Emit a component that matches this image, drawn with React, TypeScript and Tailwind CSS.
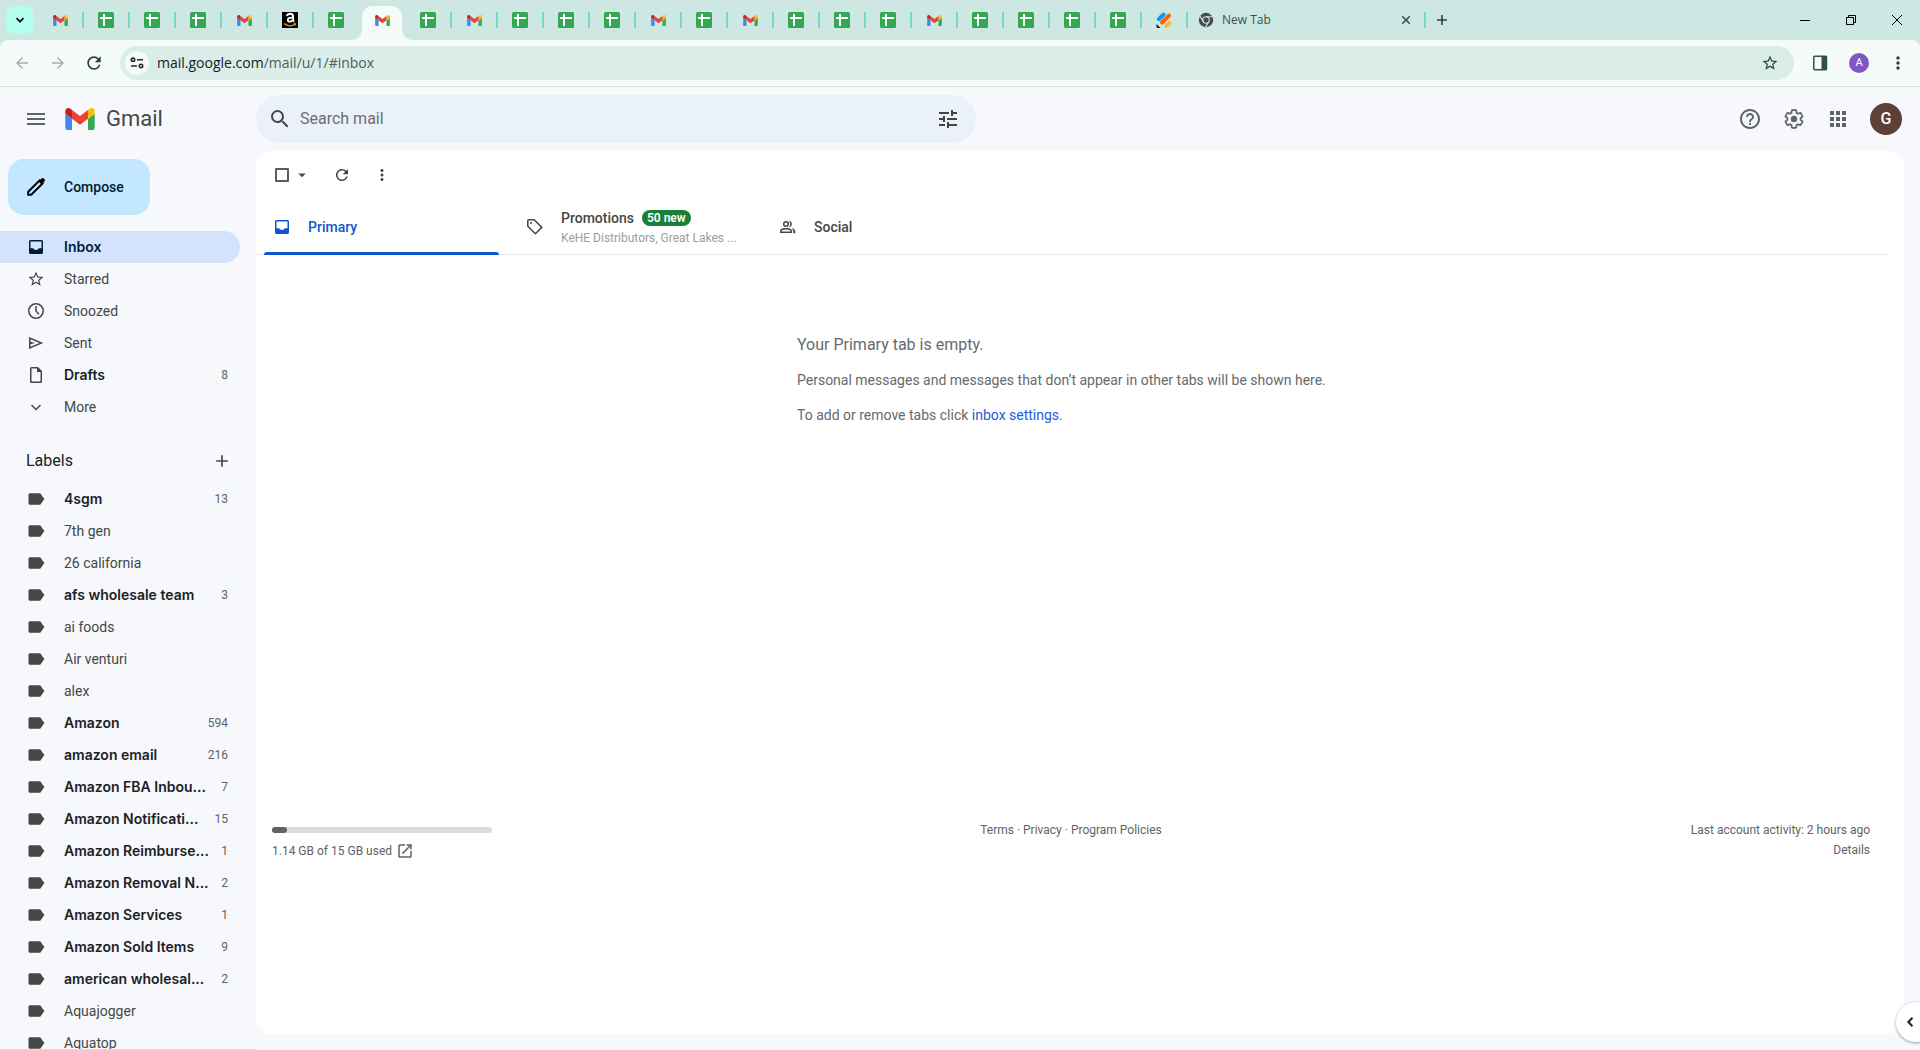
import React from "react";
import {
  MdAdd,
  MdApps,
  MdArrowBack,
  MdArrowDropDown,
  MdArrowForward,
  MdHelpOutline,
  MdLabel,
  MdMenu,
  MdMoreVert,
  MdOpenInNew,
  MdRefresh,
  MdSearch,
  MdStarBorder,
  MdTune,
} from "react-icons/md";

type IconProps = { className?: string };

const GmailMark = ({ className }: IconProps) => (
  <svg viewBox="52 42 88 66" className={className} aria-hidden="true">
    <path fill="#4285f4" d="M58 108h14V74L52 59v43c0 3.32 2.69 6 6 6" />
    <path fill="#34a853" d="M120 108h14c3.32 0 6-2.69 6-6V59l-20 15" />
    <path fill="#fbbc04" d="M120 48v26l20-15v-8c0-7.42-8.47-11.65-14.4-7.2" />
    <path fill="#ea4335" d="M72 74V48l24 18 24-18v26L96 92" />
    <path fill="#c5221f" d="M52 51v8l20 15V48l-5.600-4.200c-5.940-4.450-14.400-.22-14.400 7.200" />
  </svg>
);

const SheetMark = () => (
  <svg viewBox="0 0 16 16" className="size-4" aria-hidden="true">
    <rect width="16" height="16" rx="1.500" fill="#34a853" />
    <path d="M5 2h2v3h7v2H7v7H5V7H2V5h3z" fill="#fff" />
  </svg>
);

const AmazonMark = () => (
  <svg viewBox="0 0 16 16" className="size-4" aria-hidden="true">
    <rect width="16" height="16" fill="#000" />
    <path d="M5 4.200C5.200 2.500 6.500 1.800 8.200 1.800c1.900 0 2.900.9 2.900 2.600v3.400c0 .9.300 1.300.9 2" fill="none" stroke="#fff" strokeWidth="1.900" />
    <path d="M10.500 5.600c-3-.1-4.700.6-4.700 2.400 0 2.400 3.700 2.200 4.700-.2" fill="none" stroke="#fff" strokeWidth="1.800" />
    <path d="M2 11.400c3.400 3 8 3.100 11 .9" fill="none" stroke="#f90" strokeWidth="1.300" />
    <path d="M11.600 11.300h2.300l-.6 2.200" fill="none" stroke="#f90" strokeWidth=".9" />
  </svg>
);

const StripesMark = () => (
  <svg viewBox="0 0 16 16" className="size-4" aria-hidden="true">
    <g strokeWidth="4" strokeLinecap="round">
      <path d="M3 7l4.500-4.500" stroke="#0a99ff" />
      <path d="M6 10.500L13 3.600" stroke="#ff6100" />
      <path d="M10.500 13.800l3-2.800" stroke="#ffb629" />
    </g>
    <path d="M.5 12l4 4h-3a1 1 0 0 1-1-1z" fill="#0a1551" />
  </svg>
);

const ChromeMark = () => (
  <svg viewBox="0 0 16 16" className="size-4" aria-hidden="true">
    <circle cx="8" cy="8" r="7.200" fill="#474b4f" />
    <g stroke="#cde8e2" strokeWidth="1.100" fill="none">
      <circle cx="8" cy="8" r="3.200" />
      <path d="M8 4.800h6.600M5.200 9.600L1.900 3.900M10.800 9.600L7.500 15.300" />
    </g>
  </svg>
);

const InboxIcon = ({ className }: IconProps) => (
  <svg viewBox="0 0 20 20" className={className} fill="currentColor" aria-hidden="true">
    <path fillRule="evenodd" d="M4.500 3A1.500 1.500 0 0 0 3 4.500v11A1.500 1.500 0 0 0 4.500 17h11a1.500 1.500 0 0 0 1.500-1.500v-11A1.500 1.500 0 0 0 15.500 3zM4.500 4.500h11v6.800h-2.700C12.300 12.400 11.300 13 10 13s-2.300-.6-2.800-1.700H4.500z" />
  </svg>
);

const ClockIcon = ({ className }: IconProps) => (
  <svg viewBox="0 0 20 20" className={className} fill="none" stroke="currentColor" strokeWidth="1.500" aria-hidden="true">
    <circle cx="10" cy="10" r="7.250" />
    <path d="M10 5v5l3 3.200" />
  </svg>
);

const SentIcon = ({ className }: IconProps) => (
  <svg viewBox="0 0 20 20" className={className} fill="currentColor" aria-hidden="true">
    <path fillRule="evenodd" d="M3 16V4l14.300 6zM4.500 13.800L13.500 10l-9-3.800v2.600L9 10l-4.500 1.200z" />
  </svg>
);

const DraftIcon = ({ className }: IconProps) => (
  <svg viewBox="0 0 20 20" className={className} fill="currentColor" aria-hidden="true">
    <path fillRule="evenodd" d="M5.500 2A1.500 1.500 0 0 0 4 3.500v13A1.500 1.500 0 0 0 5.500 18h9a1.500 1.500 0 0 0 1.500-1.500V6l-4-4zM5.500 3.500H11V7h3.500v9.500h-9z" />
  </svg>
);

const ChevronDown = ({ className }: IconProps) => (
  <svg viewBox="0 0 20 20" className={className} fill="none" stroke="currentColor" strokeWidth="1.500" aria-hidden="true">
    <path d="M5.500 8l4.500 4.500L14.500 8" />
  </svg>
);

const TagIcon = ({ className }: IconProps) => (
  <svg viewBox="0 0 20 20" className={className} fill="none" stroke="currentColor" strokeWidth="1.500" strokeLinejoin="round" aria-hidden="true">
    <path d="M2.800 3.800a1 1 0 0 1 1-1h5.400l7.600 7.600-6.400 6.400-7.600-7.600z" />
    <circle cx="6" cy="6" r="1" fill="currentColor" stroke="none" />
  </svg>
);

const PeopleIcon = ({ className }: IconProps) => (
  <svg viewBox="0 0 20 20" className={className} fill="none" stroke="currentColor" strokeWidth="1.500" aria-hidden="true">
    <circle cx="8" cy="7" r="2.300" />
    <path d="M2.750 15.250v-1c0-1.300 2.500-2.400 5.250-2.400s5.250 1.100 5.250 2.400v1z" />
    <path d="M11.500 4.100c1.500.3 2.100 1.500 2.100 2.900s-.6 2.600-2.100 2.900c1.300-1.700 1.300-4.100 0-5.800zM14 11.500c1.900.6 3 1.500 3 2.700V16h-1.500v-1.800c0-1-.5-1.900-1.500-2.700z" fill="currentColor" strokeWidth=".5" />
  </svg>
);

const PencilIcon = ({ className }: IconProps) => (
  <svg viewBox="0 0 24 24" className={className} aria-hidden="true">
    <path d="M4.200 16.800L15.600 5.400l3 3L7.200 19.800H4.200z" fill="none" stroke="currentColor" strokeWidth="2" />
    <path d="M14.500 6.500l2.900-2.900a1.800 1.800 0 0 1 2.500 0l.5.500a1.800 1.800 0 0 1 0 2.500l-2.900 2.900z" fill="currentColor" />
  </svg>
);

const GearIcon = ({ className }: IconProps) => (
  <svg viewBox="0 0 24 24" className={className} aria-hidden="true">
    <path
      fill="none"
      stroke="currentColor"
      strokeWidth="1.900"
      strokeLinejoin="round"
      d="M19.140 12.940c.04-.3.06-.61.06-.94 0-.32-.02-.64-.07-.94l2.030-1.580a.49.49 0 0 0 .12-.61l-1.920-3.320a.488.488 0 0 0-.59-.22l-2.390.96c-.5-.38-1.030-.7-1.620-.94l-.36-2.540a.484.484 0 0 0-.48-.41h-3.840c-.24 0-.43.17-.47.41l-.36 2.540c-.59.24-1.130.57-1.620.94l-2.390-.96c-.22-.08-.47 0-.59.22L2.740 8.870c-.12.21-.08.47.12.61l2.030 1.580c-.05.3-.09.63-.09.94s.02.64.07.94l-2.030 1.580a.49.49 0 0 0-.12.61l1.920 3.320c.12.22.37.29.59.22l2.390-.96c.5.38 1.030.7 1.620.94l.36 2.540c.05.24.24.41.48.41h3.840c.24 0 .44-.17.47-.41l.36-2.540c.59-.24 1.130-.56 1.620-.94l2.390.96c.22.08.47 0 .59-.22l1.920-3.320c.12-.22.07-.47-.12-.61l-2.010-1.580z"
    />
    <circle cx="12" cy="12" r="3.500" fill="currentColor" />
  </svg>
);

const SiteInfoIcon = () => (
  <svg viewBox="0 0 16 16" className="size-4" fill="none" stroke="#1d2b28" strokeWidth="1.600" aria-hidden="true">
    <circle cx="4" cy="4.800" r="1.700" />
    <path d="M8 4.800h6M2 11h6" />
    <circle cx="12" cy="11" r="1.700" />
  </svg>
);

type TabKind = "mail" | "sheet" | "amazon" | "stripes";

const tabs: TabKind[] = [
  "mail", "sheet", "sheet", "sheet", "mail", "amazon", "sheet", "mail", "sheet",
  "mail", "sheet", "sheet", "sheet", "mail", "sheet", "mail", "sheet", "sheet",
  "sheet", "mail", "sheet", "sheet", "sheet", "sheet", "stripes",
];
const activeTab = 7;

const TabMark = ({ kind }: { kind: TabKind }) => {
  if (kind === "mail") return <GmailMark className="h-[11px] w-[15px]" />;
  if (kind === "sheet") return <SheetMark />;
  if (kind === "amazon") return <AmazonMark />;
  return <StripesMark />;
};

const Separator = () => <span className="h-4 w-[2px] shrink-0 bg-[#74d9cb]" />;

const TabStrip = () => (
  <div className="flex h-10 shrink-0 items-center bg-[#cde8e2] pl-1.5">
    <button aria-label="Search tabs" className="mr-1 flex size-7 items-center justify-center rounded-[10px] bg-[#b2fff0]">
      <svg viewBox="0 0 10 10" className="size-2.5" fill="none" stroke="#111" strokeWidth="1.800" aria-hidden="true">
        <path d="M1.500 3.200L5 6.700l3.500-3.500" />
      </svg>
    </button>
    {tabs.map((kind, i) =>
      i === activeTab ? (
        <button key={i} aria-label="Gmail tab" aria-current="page" className="relative flex h-full w-[46px] items-end pl-0.5">
          <span className="flex h-[34px] w-10 items-start justify-center rounded-t-[10px] bg-[#f4fbf9] pt-1.5">
            <span className="flex size-4 items-center justify-center"><TabMark kind={kind} /></span>
          </span>
          <svg viewBox="0 0 64 12" className="absolute bottom-0 -left-2.5 h-3 w-16" fill="#f4fbf9" aria-hidden="true">
            <path d="M0 12c8 0 12-4 12-12v12zM64 12c-8 0-12-4-12-12v12z" />
          </svg>
        </button>
      ) : (
        <button key={i} aria-label={`${kind} tab`} className="flex h-full w-[46px] items-center">
          <span className="flex w-11 justify-center"><TabMark kind={kind} /></span>
          {i !== activeTab - 1 && <Separator />}
        </button>
      )
    )}
    <div className="flex h-full w-[238px] items-center pl-[10px]">
      <ChromeMark />
      <span className="ml-2 flex-1 font-['Open_Sans','Noto_Sans',sans-serif] text-[12px] leading-4 text-[#37524c]">New Tab</span>
      <button aria-label="Close tab" className="mr-[13px]">
        <svg viewBox="0 0 10 10" className="size-2.5" stroke="#37524c" strokeWidth="1.600" aria-hidden="true">
          <path d="M1.200 1.200l7.600 7.600M8.800 1.200L1.200 8.800" />
        </svg>
      </button>
      <Separator />
    </div>
    <button aria-label="New tab" className="ml-[11px]">
      <svg viewBox="0 0 10 10" className="size-2.5" stroke="#24443e" strokeWidth="1.600" aria-hidden="true">
        <path d="M5 0v10M0 5h10" />
      </svg>
    </button>
    <div className="ml-auto flex h-full">
      <button aria-label="Minimize" className="flex w-[46px] items-center justify-center">
        <svg viewBox="0 0 10 10" className="size-2.5" stroke="#000" aria-hidden="true"><path d="M0 5.500h10" /></svg>
      </button>
      <button aria-label="Restore" className="flex w-[46px] items-center justify-center">
        <svg viewBox="0 0 10 10" className="size-2.5" stroke="#000" fill="none" aria-hidden="true">
          <path d="M.5 2.500h7v7h-7zM2.500 2.500v-2h7v7h-2" />
        </svg>
      </button>
      <button aria-label="Close" className="flex w-[46px] items-center justify-center">
        <svg viewBox="0 0 10 10" className="size-2.5" stroke="#000" aria-hidden="true"><path d="M0 0l10 10M10 0L0 10" /></svg>
      </button>
    </div>
  </div>
);

const AddressBar = () => (
  <div className="shrink-0 bg-[#cde8e2]">
    <div className="flex h-[47px] items-center rounded-t-lg border-b border-[#d3e3df] bg-[#f4fbf9] pl-[13px]">
      <button aria-label="Back" className="flex w-9 text-[#a3b0ad]"><MdArrowBack className="size-[18px]" /></button>
      <button aria-label="Forward" className="flex w-[35px] text-[#a3b0ad]"><MdArrowForward className="size-[18px]" /></button>
      <button aria-label="Reload" className="flex w-9 text-[#24443e]"><MdRefresh className="size-5" /></button>
      <div className="flex h-[34px] flex-1 items-center rounded-full bg-[#dbede8] pr-[15px] pl-[5px]">
        <button aria-label="Site information" className="flex size-6 items-center justify-center rounded-full bg-[#f4fbf9]">
          <SiteInfoIcon />
        </button>
        <a href="#inbox" className="ml-2 flex-1 font-['Open_Sans','Noto_Sans',sans-serif] text-[14px] leading-5 text-[#4b5f5b]">
          <span className="text-[#15201e]">mail.google.com</span>/mail/u/1/#inbox
        </a>
        <button aria-label="Bookmark" className="text-[#24443e]"><MdStarBorder className="size-[18px]" /></button>
      </div>
      <button aria-label="Side panel" className="ml-[18px]">
        <svg viewBox="0 0 16 16" className="size-4" aria-hidden="true">
          <rect x="1.800" y="1.300" width="12.700" height="13.400" rx="1" fill="none" stroke="#31504a" strokeWidth="1.500" />
          <path d="M9.500 1h5v14h-5z" fill="#31504a" />
        </svg>
      </button>
      <button aria-label="Profile" className="ml-[21px] flex size-5 items-center justify-center rounded-full bg-[#7e57c2] font-['Roboto',sans-serif] text-[11px] text-white">A</button>
      <button aria-label="Chrome menu" className="mr-3 ml-[19px] text-[#24443e]"><MdMoreVert className="size-5" /></button>
    </div>
  </div>
);

const Header = () => (
  <header className="flex h-16 shrink-0 items-center pr-[18px] pl-6 text-[#5f6368]">
    <div className="flex w-[232px] shrink-0 items-center">
      <button aria-label="Main menu"><MdMenu className="size-6" /></button>
      <a href="#home" className="ml-[17px] flex items-center gap-[11px]">
        <GmailMark className="h-[22px] w-[30px]" />
        <span className="text-[22px] leading-6 text-[#444746]">Gmail</span>
      </a>
    </div>
    <div className="flex h-12 w-[720px] items-center rounded-full bg-[#eaf1fb] px-3 text-[#444746]">
      <button aria-label="Search"><MdSearch className="size-6" /></button>
      <input aria-label="Search mail" placeholder="Search mail" className="ml-2 min-w-0 flex-1 bg-transparent text-[16px] leading-6 outline-none placeholder:text-[#6b6f72]" />
      <button aria-label="Search options" className="mr-1"><MdTune className="size-6" /></button>
    </div>
    <div className="ml-auto flex items-center gap-5">
      <button aria-label="Support"><MdHelpOutline className="size-6" /></button>
      <button aria-label="Settings" className="flex size-6 items-center justify-center"><GearIcon className="size-[22px]" /></button>
      <button aria-label="Google apps"><MdApps className="size-6" /></button>
      <button aria-label="Account" className="flex size-8 items-center justify-center rounded-full bg-[#5d4037] font-['Roboto',sans-serif] text-[16px] font-medium text-white">G</button>
    </div>
  </header>
);

type Row = { name: string; count?: number };

const folders: (Row & { icon: React.ReactNode; selected?: boolean })[] = [
  { name: "Inbox", icon: <InboxIcon className="size-5" />, selected: true },
  { name: "Starred", icon: <MdStarBorder className="size-[18px]" /> },
  { name: "Snoozed", icon: <ClockIcon className="size-5" /> },
  { name: "Sent", icon: <SentIcon className="size-5" /> },
  { name: "Drafts", icon: <DraftIcon className="size-5" />, count: 8 },
  { name: "More", icon: <ChevronDown className="size-5" /> },
];

const labels: Row[] = [
  { name: "4sgm", count: 13 },
  { name: "7th gen" },
  { name: "26 california" },
  { name: "afs wholesale team", count: 3 },
  { name: "ai foods" },
  { name: "Air venturi" },
  { name: "alex" },
  { name: "Amazon", count: 594 },
  { name: "amazon email", count: 216 },
  { name: "Amazon FBA Inbou...", count: 7 },
  { name: "Amazon Notificati...", count: 15 },
  { name: "Amazon Reimburse...", count: 1 },
  { name: "Amazon Removal N...", count: 2 },
  { name: "Amazon Services", count: 1 },
  { name: "Amazon Sold Items", count: 9 },
  { name: "american wholesal...", count: 2 },
  { name: "Aquajogger" },
  { name: "Aquatop" },
];

const rowBase = "flex h-8 w-[240px] shrink-0 items-center rounded-r-full pr-3 pl-[26px] text-[14px] leading-5 whitespace-nowrap";
const boldText = "font-['Inter','Roboto',sans-serif] font-semibold";

const NavRow = ({ name, count, icon, selected }: Row & { icon: React.ReactNode; selected?: boolean }) => (
  <a
    href="#folder"
    className={
      selected
        ? `${rowBase} bg-[#d3e3fd] text-[#001d35]`
        : count
          ? `${rowBase} text-[#202124]`
          : `${rowBase} text-[#444746]`
    }
  >
    <span className={`flex size-5 items-center justify-center ${selected ? "text-[#001d35]" : "text-[#444746]"}`}>{icon}</span>
    <span className={`ml-[18px] flex-1 ${selected || count ? boldText : ""}`}>{name}</span>
    {count && <span className="text-[12px] text-[#5f6368]">{count}</span>}
  </a>
);

const Sidebar = () => (
  <aside className="flex w-64 shrink-0 flex-col overflow-hidden border-b border-[#dadce0] pt-2">
    <button className="mb-4 ml-2 flex h-14 w-[142px] shrink-0 items-center rounded-2xl bg-[#c2e7ff] pl-4 text-[14px] font-medium text-[#001d35]">
      <PencilIcon className="size-6 text-black" />
      <span className="ml-4">Compose</span>
    </button>
    <nav aria-label="Folders" className="flex flex-col">
      {folders.map((f) => <NavRow key={f.name} {...f} />)}
    </nav>
    <div className="mt-4 flex h-11 shrink-0 items-center justify-between pr-6 pl-[26px] text-[#444746]">
      <h2 className="text-[16px] text-[#202124]">Labels</h2>
      <button aria-label="Create new label"><MdAdd className="size-5" /></button>
    </div>
    <nav aria-label="Labels" className="flex flex-col">
      {labels.map((l) => <NavRow key={l.name} {...l} icon={<MdLabel className="size-5" />} />)}
    </nav>
  </aside>
);

const tabBase = "flex h-14 w-[253px] items-center pl-2 text-left text-[14px]";

const MainPanel = () => (
  <main className="mr-4 mb-4 flex min-w-0 flex-1 flex-col overflow-hidden rounded-2xl bg-white">
    <div className="flex h-12 shrink-0 items-center pl-[19px] text-[#444746]">
      <input type="checkbox" aria-label="Select all" className="size-3.5 appearance-none rounded-[1px] border-2 border-[#5a5d5c]" />
      <button aria-label="Select options" className="ml-1"><MdArrowDropDown className="size-[18px]" /></button>
      <button aria-label="Refresh" className="ml-[22px]"><MdRefresh className="size-[18px]" /></button>
      <button aria-label="More options" className="ml-[22px]"><MdMoreVert className="size-[18px]" /></button>
    </div>
    <div role="tablist" className="mr-4 flex h-14 shrink-0 border-b border-[#e6ebf2] pl-2">
      <button role="tab" aria-selected="true" className={`${tabBase} relative font-medium text-[#0b57d0]`}>
        <InboxIcon className="size-5" />
        <span className="ml-4">Primary</span>
        <span className="absolute bottom-0 left-0 h-[3px] w-[235px] rounded-t-sm bg-[#0b57d0]" />
      </button>
      <button role="tab" aria-selected="false" className={`${tabBase} text-[#444746]`}>
        <TagIcon className="size-5" />
        <span className="ml-4 w-[184px]">
          <span className="flex items-center gap-2 font-medium">
            Promotions
            <span className="rounded-full bg-[#188038] px-[5px] text-[12px] leading-4 font-semibold text-white">50 new</span>
          </span>
          <span className="block text-[12px] leading-[18px] text-[#9a9d9f]">KeHE Distributors, Great Lakes ...</span>
        </span>
      </button>
      <button role="tab" aria-selected="false" className={`${tabBase} font-medium text-[#444746]`}>
        <PeopleIcon className="size-5" />
        <span className="ml-4">Social</span>
      </button>
    </div>
    <section className="mr-[26px] flex shrink-0 justify-center pt-20 text-[14px] leading-5 text-[#666a6d]">
      <div className="flex w-[540px] flex-col gap-[15px] whitespace-nowrap">
        <p className="text-[16px] leading-5">Your Primary tab is empty.</p>
        <p>Personal messages and messages that don’t appear in other tabs will be shown here.</p>
        <p>
          To add or remove tabs click <a href="#settings" className="text-[#1a5fd8]">inbox settings</a>.
        </p>
      </div>
    </section>
    <footer className="mt-[395px] mr-[34px] ml-4 grid shrink-0 grid-cols-3 text-[12px] leading-5 text-[#5f6368]">
      <div>
        <div className="mt-[7px] mb-2 h-1.5 w-[220px] rounded-full bg-[#dadce0]">
          <div className="h-full w-[15px] rounded-full bg-[#5f6368]" />
        </div>
        <a href="#storage" className="flex items-center gap-1">
          1.14 GB of 15 GB used
          <MdOpenInNew className="size-[18px]" />
        </a>
      </div>
      <p className="text-center">
        <a href="#terms">Terms</a> · <a href="#privacy">Privacy</a> · <a href="#policies">Program Policies</a>
      </p>
      <div className="text-right">
        <p>Last account activity: 2 hours ago</p>
        <a href="#details">Details</a>
      </div>
    </footer>
  </main>
);

export default function App() {
  return (
    <div className="flex h-screen flex-col overflow-hidden bg-[#f6f8fc] font-['Roboto','Liberation_Sans',sans-serif]">
      <TabStrip />
      <AddressBar />
      <div className="relative flex min-h-0 flex-1 flex-col overflow-hidden">
        <Header />
        <div className="flex min-h-0 flex-1">
          <Sidebar />
          <MainPanel />
        </div>
        <button aria-label="Show side panel" className="absolute -right-4 bottom-2 flex size-10 items-center rounded-full bg-white pl-2.5 shadow-[0_1px_3px_rgba(60,64,67,0.5)]">
          <svg viewBox="0 0 8 10" className="h-2.5 w-2" fill="none" stroke="#1f1f1f" strokeWidth="2" aria-hidden="true">
            <path d="M6.500 .8L2.300 5l4.200 4.200" />
          </svg>
        </button>
      </div>
    </div>
  );
}
